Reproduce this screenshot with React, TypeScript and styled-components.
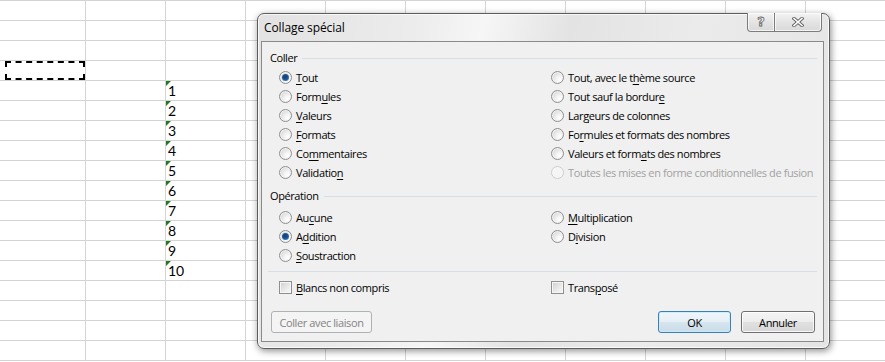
import React from 'react';
import styled, { createGlobalStyle, css } from 'styled-components';

const GlobalStyle = createGlobalStyle`
  html, body { margin: 0; padding: 0; background: #fff; overflow: hidden; }
`;

const Page = styled.div`
  position: relative;
  width: 885px;
  height: 362px;
  overflow: hidden;
  background: #fff;
`;

/* ---------- spreadsheet ---------- */
const Sheet = styled.div`
  display: grid;
  grid-template-columns: 6px repeat(11, 80px);
  grid-auto-rows: 20px;
  border-top: 1px solid #d4d4d4;
  font-family: Lato, "Open Sans", sans-serif;
  font-size: 14px;
  color: #000;
`;

const Cell = styled.div<{ $first?: boolean; $flag?: boolean; $marked?: boolean }>`
  position: relative;
  box-sizing: border-box;
  border-bottom: 1px solid #d4d4d4;
  border-right: ${(p) => (p.$first ? 'none' : '1px solid #d4d4d4')};
  padding: 0 2px 0 2px;
  display: flex;
  align-items: flex-end;
  line-height: 18px;
  ${(p) =>
    p.$flag &&
    css`
      &::before {
        content: '';
        position: absolute;
        left: 0;
        top: 0;
        width: 0;
        height: 0;
        border-top: 5px solid #1e7b22;
        border-right: 5px solid transparent;
      }
    `}
  ${(p) =>
    p.$marked &&
    css`
      &::after {
        content: '';
        position: absolute;
        left: -1px;
        top: 0;
        right: 0;
        bottom: 0;
        border: 2px dashed #000;
      }
    `}
`;

/* ---------- dialog window ---------- */
const Window = styled.div`
  position: absolute;
  left: 257px;
  top: 13px;
  width: 573px;
  height: 336px;
  box-sizing: border-box;
  border: 1px solid #5c5c5c;
  border-radius: 7px;
  background: linear-gradient(100deg, #e2e2e2 0%, #ececec 25%, #f6f6f6 36%, #e3e3e3 50%, #ebebeb 70%, #e4e4e4 100%);
  box-shadow: inset 0 0 0 1px rgba(255, 255, 255, 0.75), 1px 2px 7px rgba(0, 0, 0, 0.45);
  display: flex;
  flex-direction: column;
  padding: 0 5px 6px 3px;
  font-family: "Segoe UI", "Open Sans", sans-serif;
  font-size: 11px;
  letter-spacing: -0.4px;
  color: #000;
`;

const TitleBar = styled.div`
  height: 27px;
  display: flex;
  align-items: flex-start;
  margin-right: 2px;
`;

const TitleText = styled.div`
  padding-left: 3px;
  line-height: 27px;
  font-size: 12px;
  letter-spacing: -0.1px;
`;

const TitleButtons = styled.div`
  margin-left: auto;
  margin-top: -1px;
  display: flex;
  height: 19px;
`;

const CaptionButton = styled.div<{ $w: number; $last?: boolean }>`
  width: ${(p) => p.$w}px;
  height: 19px;
  box-sizing: border-box;
  border: 1px solid #7c7c7c;
  border-top: none;
  border-left: ${(p) => (p.$last ? 'none' : '1px solid #7c7c7c')};
  border-radius: ${(p) => (p.$last ? '0 0 4px 0' : '0 0 0 4px')};
  background: linear-gradient(#f3f3f3, #e4e4e4 50%, #d9d9d9 100%);
  box-shadow: inset 0 0 0 1px rgba(255, 255, 255, 0.7);
  display: flex;
  align-items: center;
  justify-content: center;
`;

const HelpGlyph = styled.span`
  font-family: "DejaVu Sans", sans-serif;
  font-weight: bold;
  font-size: 13px;
  line-height: 1;
  color: #fff;
  letter-spacing: 0;
  -webkit-text-stroke: 0.8px #5f5f5f;
  margin-top: -1px;
`;

const Client = styled.div`
  flex: 1;
  box-sizing: border-box;
  border: 1px solid #8a8a8a;
  background: #f0f0f0;
  display: flex;
  flex-direction: column;
  padding: 0 6px 0 8px;
`;

const SectionHeader = styled.div<{ $top: number }>`
  margin-top: ${(p) => p.$top}px;
  height: 16px;
  line-height: 16px;
  display: flex;
  align-items: center;
  gap: 5px;
  &::after {
    content: '';
    flex: 1;
    height: 1px;
    background: #d5dfe5;
  }
`;

const OptionGrid = styled.div<{ $top: number; $rows: number; $row?: number }>`
  margin-top: ${(p) => p.$top}px;
  margin-left: 9px;
  display: grid;
  grid-template-columns: 272px 1fr;
  grid-template-rows: repeat(${(p) => p.$rows}, ${(p) => p.$row ?? 19}px);
  grid-auto-flow: column;
`;

const Option = styled.label<{ $disabled?: boolean }>`
  display: flex;
  align-items: center;
  gap: 4px;
  white-space: nowrap;
  color: ${(p) => (p.$disabled ? '#a2a2a2' : '#000')};
`;

const OptionText = styled.span`
  display: block;
`;

const Radio = styled.span<{ $checked?: boolean; $disabled?: boolean }>`
  position: relative;
  flex: none;
  width: 13px;
  height: 13px;
  box-sizing: border-box;
  border-radius: 50%;
  border: 1px solid ${(p) => (p.$disabled ? '#cdcdcd' : '#8e8f8f')};
  background: ${(p) =>
    p.$disabled
      ? '#f5f5f5'
      : 'radial-gradient(circle at 72% 72%, #ffffff 0%, #f4f4f4 30%, #dadada 75%, #c9c9c9 100%)'};
  box-shadow: inset 0 0 0 1px ${(p) => (p.$disabled ? '#f8f8f8' : '#f3f3f3')};
  ${(p) =>
    p.$checked &&
    css`
      &::after {
        content: '';
        position: absolute;
        left: 2px;
        top: 2px;
        width: 7px;
        height: 7px;
        border-radius: 50%;
        background: radial-gradient(circle at 45% 40%, #173c6a 0%, #1c5294 45%, #3d86c8 78%, #8ac3ea 100%);
      }
    `}
`;

const Check = styled.span`
  flex: none;
  width: 13px;
  height: 13px;
  box-sizing: border-box;
  border: 1px solid #8e8f8f;
  background: linear-gradient(135deg, #cdcdcd 0%, #e9e9e9 55%, #f9f9f9 100%);
  box-shadow: inset 0 0 0 1px #f6f6f6;
`;

const Key = styled.span`
  text-decoration: underline;
  text-underline-offset: 2px;
`;

const Separator = styled.div`
  margin: 6px 0 0 -2px;
  height: 1px;
  background: #d5dfe5;
`;

const ButtonRow = styled.div`
  margin-top: 15px;
  padding-left: 1px;
  padding-right: 2px;
  display: flex;
  gap: 10px;
`;

const Spacer = styled.div`
  flex: 1;
`;

const Button = styled.div<{ $w: number; $variant?: 'default' | 'disabled' }>`
  width: ${(p) => p.$w}px;
  height: 22px;
  box-sizing: border-box;
  border-radius: 3px;
  display: flex;
  align-items: center;
  justify-content: center;
  border: 1px solid #707070;
  background: linear-gradient(#f5f5f5, #ededed 48%, #e0e0e0 52%, #d8d8d8);
  box-shadow: inset 0 0 0 1px rgba(255, 255, 255, 0.8);
  color: #000;
  ${(p) =>
    p.$variant === 'default' &&
    css`
      border-color: #3c7fb1;
      background: linear-gradient(#f1f7fb, #e5eff5 48%, #d6e5ee 52%, #cadce8);
      box-shadow: inset 0 0 0 1px rgba(200, 235, 255, 0.9);
    `}
  ${(p) =>
    p.$variant === 'disabled' &&
    css`
      border-color: #adb2b5;
      background: #f4f4f4;
      box-shadow: none;
      color: #838383;
    `}
`;

type Opt = { label: string; key?: number; checked?: boolean; disabled?: boolean };

const Label = ({ label, k }: { label: string; k?: number }) => (
  <OptionText>
    {k === undefined ? (
      label
    ) : (
      <>
        {label.slice(0, k)}
        <Key>{label[k]}</Key>
        {label.slice(k + 1)}
      </>
    )}
  </OptionText>
);

const pasteLeft: Opt[] = [
  { label: 'Tout', key: 0, checked: true },
  { label: 'Formules', key: 4 },
  { label: 'Valeurs', key: 0 },
  { label: 'Formats', key: 0 },
  { label: 'Commentaires', key: 2 },
  { label: 'Validation', key: 9 },
];
const pasteRight: Opt[] = [
  { label: 'Tout, avec le thème source', key: 15 },
  { label: 'Tout sauf la bordure', key: 19 },
  { label: 'Largeurs de colonnes', key: 3 },
  { label: 'Formules et formats des nombres', key: 2 },
  { label: 'Valeurs et formats des nombres', key: 15 },
  { label: 'Toutes les mises en forme conditionnelles de fusion', disabled: true },
];
const opLeft: Opt[] = [
  { label: 'Aucune', key: 2 },
  { label: 'Addition', key: 1, checked: true },
  { label: 'Soustraction', key: 0 },
];
const opRight: Opt[] = [
  { label: 'Multiplication', key: 0 },
  { label: 'Division', key: 1 },
];

const RadioList = ({ items, rows, top }: { items: Opt[]; rows: number; top: number }) => (
  <OptionGrid $top={top} $rows={rows}>
    {items.map((o) => (
      <Option key={o.label} $disabled={o.disabled}>
        <Radio $checked={o.checked} $disabled={o.disabled} />
        <Label label={o.label} k={o.key} />
      </Option>
    ))}
  </OptionGrid>
);

const COLS = 12;
const ROWS = 18;

export default function App() {
  const cells: React.ReactNode[] = [];
  for (let r = 0; r < ROWS; r++) {
    for (let c = 0; c < COLS; c++) {
      const n = c === 3 && r >= 4 && r <= 13 ? r - 3 : null;
      cells.push(
        <Cell key={`${r}-${c}`} $first={c === 0} $flag={n !== null} $marked={c === 1 && r === 3}>
          {n}
        </Cell>
      );
    }
  }

  return (
    <Page>
      <GlobalStyle />
      <Sheet>{cells}</Sheet>
      <Window>
        <TitleBar>
          <TitleText>Collage spécial</TitleText>
          <TitleButtons>
            <CaptionButton $w={28}>
              <HelpGlyph>?</HelpGlyph>
            </CaptionButton>
            <CaptionButton $w={47} $last>
              <svg width="12" height="10" viewBox="0 0 12 10">
                <path d="M2 1.5 L10 8.5 M10 1.5 L2 8.5" stroke="#5f5f5f" strokeWidth="3.4" strokeLinecap="square" />
                <path d="M2 1.5 L10 8.5 M10 1.5 L2 8.5" stroke="#ffffff" strokeWidth="1.6" strokeLinecap="square" />
              </svg>
            </CaptionButton>
          </TitleButtons>
        </TitleBar>
        <Client>
          <SectionHeader $top={8}>Coller</SectionHeader>
          <RadioList items={[...pasteLeft, ...pasteRight]} rows={6} top={2} />
          <SectionHeader $top={6}>Opération</SectionHeader>
          <RadioList items={[...opLeft, ...opRight]} rows={3} top={4} />
          <Separator />
          <OptionGrid $top={6} $rows={1} $row={18}>
            <Option>
              <Check />
              <Label label="Blancs non compris" k={0} />
            </Option>
            <Option>
              <Check />
              <Label label="Transposé" k={5} />
            </Option>
          </OptionGrid>
          <ButtonRow>
            <Button $w={101} $variant="disabled">Coller avec liaison</Button>
            <Spacer />
            <Button $w={73} $variant="default">OK</Button>
            <Button $w={74}>Annuler</Button>
          </ButtonRow>
        </Client>
      </Window>
    </Page>
  );
}
